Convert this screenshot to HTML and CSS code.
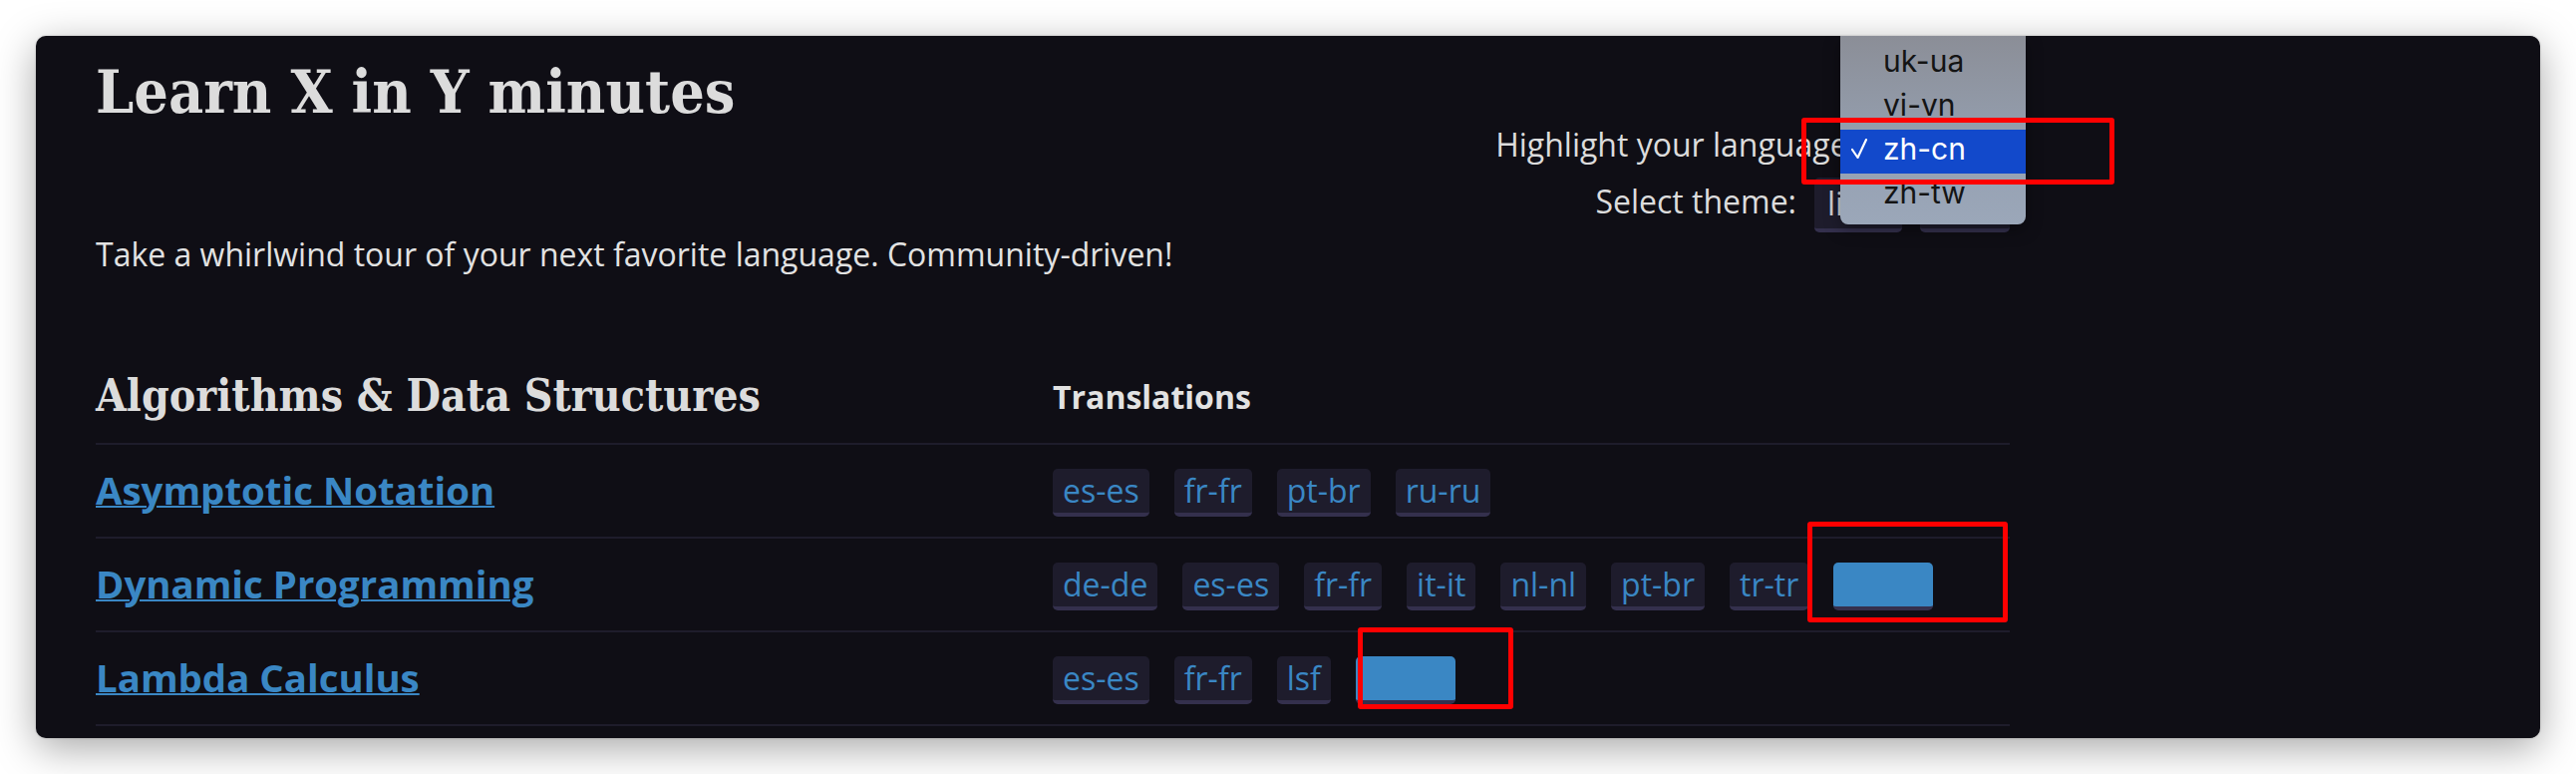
FILE: index.html
```html
<!DOCTYPE html>
<html lang="en">
<head>
<meta charset="utf-8">
<title>Learn X in Y minutes</title>
<link rel="stylesheet" href="styles.css">
</head>
<body>
<div class="window">
  <div class="page">
    <header class="top">
      <h1 class="title">Learn X in Y minutes</h1>
      <div class="prefs">
        <div class="pref-row">
          <span class="pref-label">Highlight your language:</span>
          <div class="select select-lang">zh-cn</div>
        </div>
        <div class="pref-row">
          <span class="pref-label">Select theme:</span>
          <div class="select select-theme">light</div>
          <div class="select select-mode">auto</div>
        </div>
      </div>
    </header>

    <p class="tagline">Take a whirlwind tour of your next favorite language. Community-driven!</p>

    <section class="category">
      <div class="cat-head">
        <h2 class="cat-title">Algorithms &amp; Data Structures</h2>
        <div class="col-head">Translations</div>
      </div>
      <div class="row">
        <a class="topic" href="#">Asymptotic Notation</a>
        <div class="tags">
          <a class="tag" href="#">es-es</a>
          <a class="tag" href="#">fr-fr</a>
          <a class="tag" href="#">pt-br</a>
          <a class="tag" href="#">ru-ru</a>
        </div>
      </div>
      <div class="row">
        <a class="topic" href="#">Dynamic Programming</a>
        <div class="tags">
          <a class="tag" href="#">de-de</a>
          <a class="tag" href="#">es-es</a>
          <a class="tag" href="#">fr-fr</a>
          <a class="tag" href="#">it-it</a>
          <a class="tag" href="#">nl-nl</a>
          <a class="tag" href="#">pt-br</a>
          <a class="tag" href="#">tr-tr</a>
          <a class="tag tag-hl" href="#">zh-cn</a>
        </div>
      </div>
      <div class="row">
        <a class="topic" href="#">Lambda Calculus</a>
        <div class="tags">
          <a class="tag" href="#">es-es</a>
          <a class="tag" href="#">fr-fr</a>
          <a class="tag" href="#">lsf</a>
          <a class="tag tag-hl" href="#">zh-cn</a>
        </div>
      </div>
    </section>
  </div>

  <div class="popup">
    <div class="opt"><span class="check-slot"></span>uk-ua</div>
    <div class="opt"><span class="check-slot"></span>vi-vn</div>
    <div class="opt opt-sel"><span class="check-slot"><svg class="check" width="16" height="20" viewBox="0 0 16 20"><polyline points="1,11 6.5,19 15,1" fill="none" stroke="#fff" stroke-width="2.2" stroke-linecap="round" stroke-linejoin="round"/></svg></span>zh-cn</div>
    <div class="opt"><span class="check-slot"></span>zh-tw</div>
  </div>

  <div class="mark mark-lang"></div>
  <div class="mark mark-dp"></div>
  <div class="mark mark-lc"></div>
</div>
</body>
</html>
```

FILE: styles.css
```css
* {
  box-sizing: border-box;
}

html,
body {
  margin: 0;
}

body {
  width: 2584px;
  height: 776px;
  padding: 36px;
  overflow: hidden;
  background: #ffffff;
  font-family: "Open Sans", "Liberation Sans", sans-serif;
}

.window {
  position: relative;
  width: 2512px;
  height: 704px;
  background: #0f0e15;
  border-radius: 10px;
  overflow: hidden;
  box-shadow: 0 10px 40px rgba(0, 0, 0, 0.35), 0 0 2px rgba(0, 0, 0, 0.25);
}

.page {
  width: 1920px;
  margin-left: 60px;
}

/* header */
.top {
  display: flex;
  justify-content: space-between;
  align-items: flex-start;
}

.title {
  margin: 18px 0 0;
  font-family: "DejaVu Serif Condensed", "DejaVu Serif", serif;
  font-stretch: condensed;
  font-weight: 700;
  font-size: 60.5px;
  line-height: 76px;
  color: #dcdcdc;
}

.prefs {
  margin-top: 85px;
  display: flex;
  flex-direction: column;
  align-items: flex-end;
  gap: 2px;
}

.pref-row {
  display: flex;
  align-items: flex-start;
  gap: 18px;
  height: 55px;
}

.pref-label {
  margin-top: 2px;
  font-size: 32px;
  line-height: 44px;
  color: #dcdcdc;
  white-space: nowrap;
}

.select {
  height: 55px;
  padding: 0 13px;
  background: #1e1c2c;
  border-bottom: 4px solid #34304d;
  border-radius: 5px;
  color: #cfcfcf;
  font-size: 32px;
  line-height: 51px;
  white-space: nowrap;
  overflow: hidden;
}

.select-lang {
  width: 136px;
}

.select-theme {
  width: 88px;
}

.select-mode {
  width: 90px;
}

.tagline {
  margin: 0;
  font-size: 32px;
  line-height: 44px;
  color: #e2e2e2;
}

/* category table */
.category {
  margin-top: 90px;
}

.cat-head {
  display: grid;
  grid-template-columns: 960px 1fr;
  align-items: end;
  border-bottom: 2px solid #1e1c2b;
}

.cat-title {
  margin: 0;
  padding-bottom: 19px;
  font-family: "DejaVu Serif Condensed", "DejaVu Serif", serif;
  font-stretch: condensed;
  font-weight: 700;
  font-size: 44.2px;
  line-height: 58px;
  color: #dcdcdc;
}

.col-head {
  padding-bottom: 24px;
  font-weight: 700;
  font-size: 32px;
  line-height: 44px;
  color: #e2e2e2;
}

.row {
  display: grid;
  grid-template-columns: 960px 1fr;
  align-items: center;
  height: 94px;
  padding-top: 4px;
  border-bottom: 2px solid #1e1c2b;
}

.topic {
  justify-self: start;
  margin-bottom: 6px;
  font-weight: 700;
  font-size: 38.4px;
  line-height: 52px;
  color: #3a87c4;
  text-decoration: underline;
  text-decoration-thickness: 2px;
}

.tags {
  display: flex;
  align-items: center;
  gap: 25px;
}

.tag {
  height: 48px;
  padding: 0 10px;
  background: #1e1c2c;
  border-bottom: 4px solid #34304d;
  border-radius: 5px;
  color: #3a87c4;
  font-size: 32px;
  line-height: 44px;
  text-decoration: none;
  white-space: nowrap;
}

.tag-hl {
  background: #3a87c4;
  color: #3a87c4;
}

/* native select popup */
.popup {
  position: absolute;
  left: 1810px;
  top: 0;
  width: 186px;
  height: 189px;
  padding-top: 6px;
  border-radius: 0 0 8px 8px;
  background: linear-gradient(180deg, #8b8e97 0%, #95a0b1 60%, #9ba7b9 100%);
  box-shadow: 0 6px 16px rgba(0, 0, 0, 0.35);
  font-family: Inter, "Liberation Sans", sans-serif;
  font-size: 30px;
  line-height: 38px;
  color: #141414;
}

.opt {
  display: flex;
  align-items: flex-start;
  height: 44px;
  padding-left: 11px;
  white-space: nowrap;
}

.opt-sel {
  background: #1249cb;
  color: #ffffff;
}

.check-slot {
  display: block;
  width: 32px;
  height: 44px;
  flex: none;
}

.check {
  display: block;
  margin-top: 9px;
}

/* annotation boxes */
.mark {
  position: absolute;
  border: 5px solid #ff0000;
  border-radius: 3px;
}

.mark-lang {
  left: 1771px;
  top: 82px;
  width: 314px;
  height: 67px;
}

.mark-dp {
  left: 1777px;
  top: 487px;
  width: 201px;
  height: 101px;
}

.mark-lc {
  left: 1326px;
  top: 593px;
  width: 156px;
  height: 82px;
}
```
